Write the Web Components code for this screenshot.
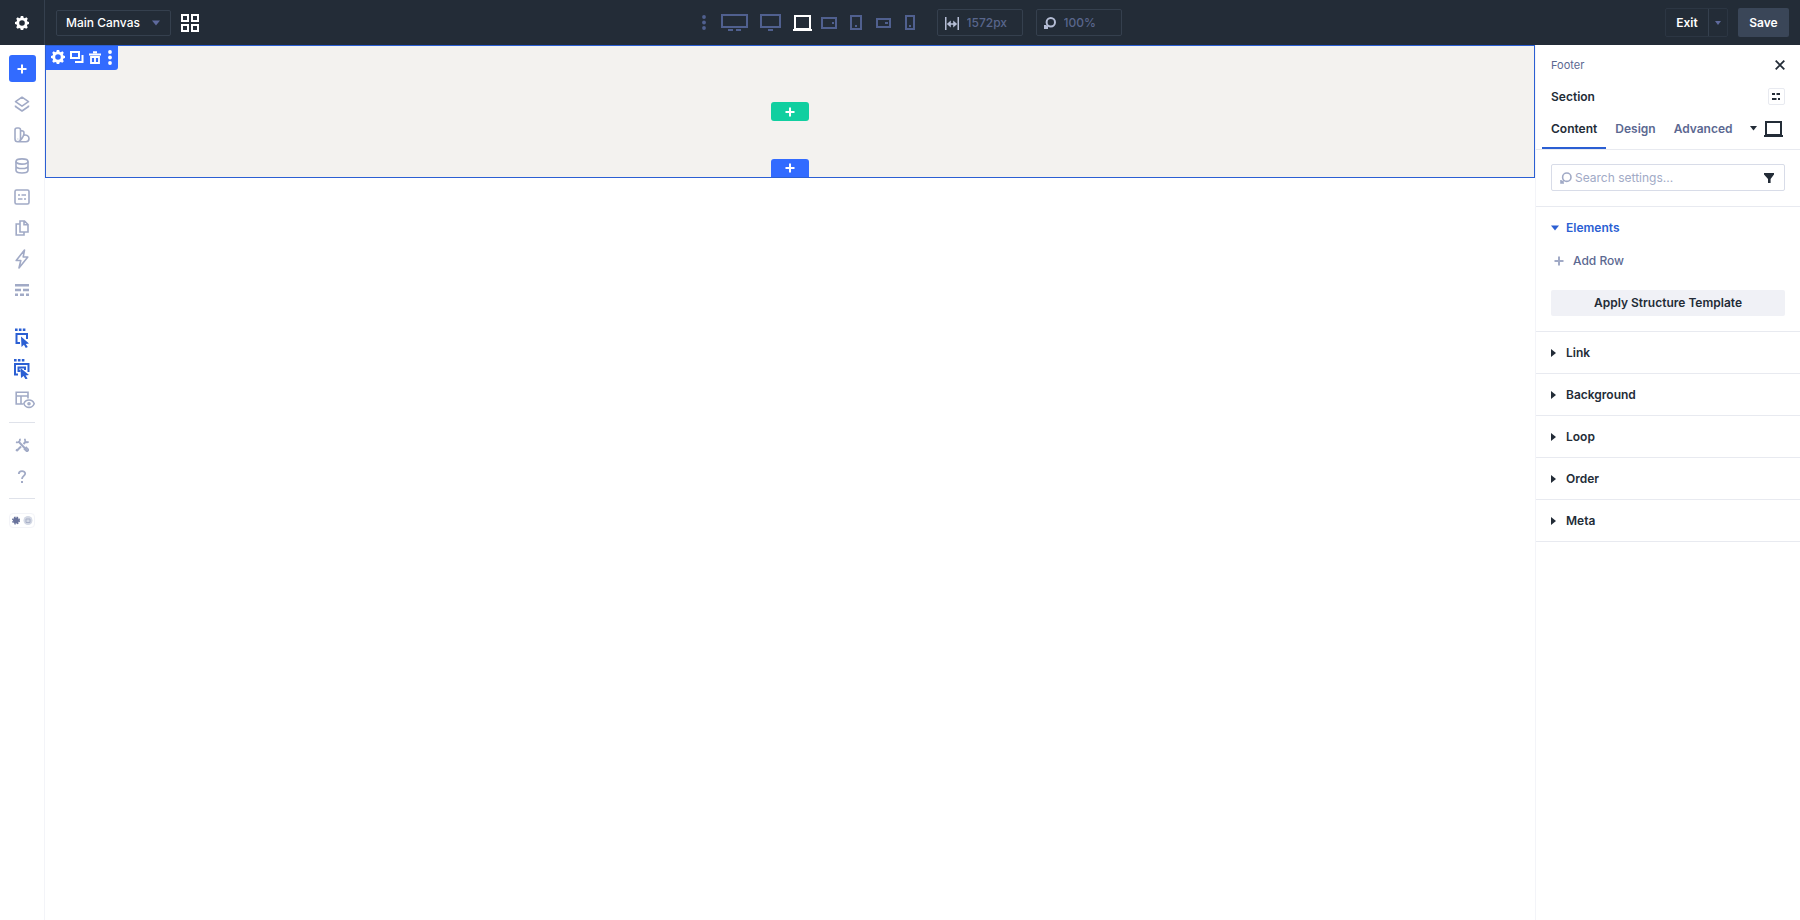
<!DOCTYPE html>
<html lang="en">
<head>
<meta charset="utf-8">
<title>Visual Builder</title>
<style>
    :root {
        --bar: #232c37;
        --bar-line: #35404e;
        --blue: #326bff;
        --blue-dark: #2b5fd3;
        --green: #10cfa0;
        --ink: #232c37;
        --slate: #5b6891;
        --muted: #a1aac6;
        --line: #e8eaf0;
        --line-soft: #f3f4f8;
    }
    body {
        margin: 0;
        font-family: Inter, "Liberation Sans", sans-serif;
        font-size: 12px;
        line-height: 16px;
        color: var(--ink);
        background: #fff;
    }
</style>
</head>
<body>
<builder-app></builder-app>

<script>
// shared by every component that has controls
const resetCss = /*css*/`
    * { box-sizing: border-box; }
    button, input, select {
        font: inherit;
        color: inherit;
        background: none;
        border: 0;
        padding: 0;
        margin: 0;
    }
    button {
        display: flex;
        align-items: center;
        justify-content: center;
        cursor: pointer;
    }
`;

// name: [width, height, markup]
const icons = {
    cog: [14, 14, '<path stroke="none" fill="currentColor" fill-rule="evenodd" d="M5.8 0h2.4l.4 1.8 1.2.5 1.6-1 1.400 1.500-.9 1.500.5 1.300 1.600.3v2.200l-1.600.4-.5 1.300.9 1.500-1.500 1.500-1.500-.9-1.300.5-.3 1.900H5.800l-.4-1.900-1.200-.5-1.600.9-1.400-1.500.9-1.500-.5-1.300L0 8.100V5.900l1.600-.3.5-1.300-.9-1.500 1.500-1.500 1.500 1 1.200-.5zM7 4.200a2.800 2.800 0 1 0 0 5.600 2.800 2.800 0 0 0 0-5.600z"/>'],
    grid: [18, 18, '<path stroke-width="2" d="M1 1h6v6H1zM11 1h6v6h-6zM1 11h6v6H1zM11 11h6v6h-6z"/>'],
    dots: [4, 15, '<g stroke="none" fill="currentColor"><circle cx="2" cy="2" r="1.9"/><circle cx="2" cy="7.5" r="1.9"/><circle cx="2" cy="13" r="1.9"/></g>'],
    wide: [27, 17, '<path stroke-width="2" d="M1 1h25v12H1z"/><path stroke-width="2" d="M7 16h5M15 16h5"/>'],
    desktop: [21, 17, '<path stroke-width="2" d="M1 1h19v12H1zM8 16h5"/>'],
    laptop: [19, 16, '<path stroke-width="2" d="M2 1h15v13H2zM0 15h19"/>'],
    tabletLand: [16, 12, '<path stroke-width="2" d="M1 1h14v10H1z"/><path stroke-width="2" d="M11 6h2"/>'],
    tablet: [12, 15, '<path stroke-width="2" d="M1 1h10v13H1z"/><path stroke-width="2" d="M5 11h2"/>'],
    phoneLand: [15, 10, '<path stroke-width="2" d="M1 1h13v8H1z"/><path stroke-width="2" d="M9 5h3"/>'],
    phone: [10, 15, '<path stroke-width="2" d="M1 1h8v13H1z"/><path stroke-width="2" d="M4 11h2"/>'],
    width: [14, 14, '<path stroke-width="1.5" d="M.75 1v13M13.25 1v13M3 8h8"/><path stroke="none" fill="currentColor" d="M1.800 8l4-3.600v7.200zM12.200 8l-4-3.600v7.200z"/>'],
    search: [12, 13, '<circle cx="6.800" cy="6.200" r="4.200"/><path d="M4 9.200L1.200 12M1 9v3h3"/>'],
    caret: [8, 6, '<path stroke="none" fill="currentColor" d="M0 .5h8L4 5.500z"/>'],
    caretRight: [5, 8, '<path stroke="none" fill="currentColor" d="M0 0L5 4 0 8z"/>'],
    plus: [10, 10, '<path stroke-width="2" d="M5 .5v9M.5 5h9"/>'],
    copy: [14, 13, '<path stroke-width="2" d="M1 1h8v6H1z"/><path stroke-width="2" d="M12.500 4v7H5"/>'],
    trash: [12, 13, '<path stroke-width="2" d="M0 3.500h12M4 1.200h4"/><path stroke-width="1.800" d="M2 6h8v6H2zM6 6v6"/>'],
    layers: [16, 16, '<path stroke-linejoin="round" d="M8 1.200l6.500 4.500L8 10.200 1.500 5.700zM1.500 9.500v1L8 15l6.500-4.500v-1"/>'],
    swatches: [16, 16, '<path d="M1 3a2 2 0 0 1 2-2h1.500a2 2 0 0 1 2 2v9a2.700 2.700 0 0 1-5.500 0zM6.500 4.500a2 2 0 0 1 3.500 1.500c0 2-1.500 5-3.700 7.500M10 8.200c2.500-.6 5 .8 5 3.300 0 2-1.200 3.200-3 3.200H4M3.700 11.800v.4"/>'],
    database: [14, 16, '<ellipse cx="7" cy="3.500" rx="6" ry="2.600"/><path d="M1 3.500v8.800c0 3.600 12 3.600 12 0V3.500M1 8c0 3.400 12 3.400 12 0"/>'],
    sliders: [16, 16, '<rect x="1" y="1" width="14" height="14" rx="1.500"/><path d="M4 6h2M7.500 6H12M4 10h4.500M10 10h2"/>'],
    pages: [14, 16, '<path d="M5 1h4.500L13 4.500V12H5zM9 1.500v3.200h3.500M4.500 4H1.200v11H9v-2.500"/>'],
    bolt: [14, 20, '<path stroke-linejoin="round" d="M9.500 1L1.200 11.500h4.600L4 19l8.800-11H8.200z"/>'],
    rows: [14, 12, '<path stroke-width="2.600" d="M0 1.300h14M0 6h6M8 6h6M0 10.700h3M5 10.700h4M11 10.700h3"/>'],
    pick: [14, 20, '<path stroke-width="2.600" d="M0 1.800h2.600M3.900 1.800h2.600M7.800 1.800h2.600"/><path stroke-width="2" d="M5 15H1.500V6H12v5"/><path stroke="none" fill="currentColor" d="M6 8.500l8 7-3.200.4 2 3.200-2 .9-1.900-3.300L6.500 19z"/>'],
    pickMulti: [16, 20, '<path stroke-width="2.600" d="M0 1.300h2.600M3.900 1.300h2.600M7.800 1.300h2.600"/><path stroke-width="2" d="M4 15.500H1V5h13.500v8"/><path stroke-width="2" d="M6.500 12H4.500V8.500H11V11"/><path stroke="none" fill="currentColor" d="M6.500 9l8.500 7-3.400.4 2 3-2 1-2-3.300L7 19z"/>'],
    layoutEye: [20, 18, '<path d="M13 7.500V1.200H1.200V13H8M1.200 5H13M6 5v8"/><path fill="#fff" d="M8.800 12.700c2-4.900 8.400-4.900 10.400 0-2.100 4.900-8.300 4.900-10.400 0z"/><circle cx="14" cy="12.700" r="1"/>'],
    tools: [14, 14, '<path stroke-width="2" d="M3.500 3.500l8 8.500M2 12.500l4-4M8.500 6L11 3.500"/><path stroke-width="1.800" d="M4.800.8C5.500 3 3.500 5 1 4.200M13.500 3.500c-1 1.500-3.800 1.200-3.600-2.700M9 10.500l3 3 1.600-1.600-3-3M1 11.500l1.700 1.700"/>'],
    help: [10, 13, '<path stroke-width="1.800" d="M1.800 4C1.800.2 8.200.2 8.200 3.600 8.200 6 5 5.800 5 9"/><path stroke-width="2" d="M4 12h2"/>'],
    mode: [24, 13, '<g stroke="none"><circle cx="6" cy="6.500" r="3" fill="#69739c"/><circle cx="18" cy="6.500" r="4.500" fill="#d3d8e4"/></g><circle cx="6" cy="6.500" r="3.400" stroke="#69739c" stroke-dasharray="1.600 1.100" stroke-width="1.200"/><path stroke="#a9b1c8" stroke-width="1" d="M16 5h4v3.500h-4z"/>'],
    close: [10, 10, '<path stroke-width="1.800" d="M.7.7l8.600 8.600M9.300.7L.7 9.300"/>'],
    options: [9, 7, '<path stroke-width="2" d="M0 1h3M4.500 1H8M0 6h4.500M6 6h2"/>'],
    filter: [10, 10, '<path stroke="none" fill="currentColor" d="M0 0h10v1.500L6.600 6v4H4V6L0 1.500z"/>']
};

class BuilderIcon extends HTMLElement {
    connectedCallback() {
        const [w, h, markup] = icons[this.getAttribute('name')];
        const root = this.shadowRoot || this.attachShadow({ mode: 'open' });
        root.innerHTML = /*html*/`
            <style>
                :host { display: flex; flex: none; }
                svg { display: block; fill: none; stroke: currentColor; stroke-width: var(--icon-stroke, 1.6); }
            </style>
            <svg width="${w}" height="${h}" viewBox="0 0 ${w} ${h}" aria-hidden="true">${markup}</svg>
        `;
    }
}
customElements.define('builder-icon', BuilderIcon);

class BuilderTopbar extends HTMLElement {
    constructor() {
        super();
        this.attachShadow({ mode: 'open' });
        this._render();
    }

    _device(icon, label) {
        const active = icon === 'laptop';
        return /*html*/`<button class="${icon}" aria-label="${label}" aria-pressed="${active}"><builder-icon name="${icon}"></builder-icon></button>`;
    }

    _render() {
        this.shadowRoot.innerHTML = /*html*/`
            <style>
                ${resetCss}
                :host {
                    display: grid;
                    grid-template-columns: 1fr auto 1fr;
                    height: 45px;
                    background: var(--bar);
                    color: #fff;
                    font-weight: 500;
                }
                .left, .center, .right { display: flex; align-items: center; }
                .settings {
                    width: 45px;
                    height: 45px;
                    border-right: 1px solid var(--bar-line);
                }
                .canvas {
                    display: flex;
                    align-items: center;
                    width: 115px;
                    height: 26px;
                    margin: 0 10px 0 11px;
                    padding-right: 10px;
                    border: 1px solid var(--bar-line);
                    border-radius: 2px;
                }
                .canvas select { flex: 1; height: 24px; padding-left: 9px; appearance: none; outline: 0; }
                .canvas builder-icon { color: #5f6a9d; }
                .center { padding-left: 12px; gap: 13px; }
                .devices { display: flex; color: #50608f; }
                .devices button { width: 27px; height: 26px; }
                .devices .dots { width: 26px; }
                .devices .wide, .devices .desktop { width: 36px; }
                .devices [aria-pressed="true"] { color: #fff; }
                .field {
                    display: flex;
                    align-items: center;
                    gap: 8px;
                    width: 86px;
                    height: 27px;
                    padding: 0 7px;
                    border: 1px solid var(--bar-line);
                    border-radius: 2px;
                    color: #b5bdd5;
                    --icon-stroke: 2;
                }
                .field input { flex: 1; min-width: 0; color: #59668c; }
                .right { justify-content: flex-end; gap: 10px; padding-right: 11px; font-weight: 600; }
                .exit {
                    display: flex;
                    height: 29px;
                    border: 1px solid #2c3643;
                    border-radius: 2px;
                }
                .exit button { width: 42px; }
                .exit .more { width: 19px; border-left: 1px solid var(--bar-line); color: #5f6a9d; }
                .save { width: 51px; height: 29px; border-radius: 2px; background: #3a4658; }
            </style>
            <div class="left">
                <button class="settings" aria-label="Builder settings"><builder-icon name="cog"></builder-icon></button>
                <label class="canvas">
                    <select aria-label="Canvas"><option>Main Canvas</option></select>
                    <builder-icon name="caret"></builder-icon>
                </label>
                <button aria-label="Canvas grid"><builder-icon name="grid"></builder-icon></button>
            </div>
            <div class="center">
                <div class="devices">
                    ${this._device('dots', 'Breakpoints')}
                    ${this._device('wide', 'Ultra wide')}
                    ${this._device('desktop', 'Widescreen')}
                    ${this._device('laptop', 'Desktop')}
                    ${this._device('tabletLand', 'Tablet wide')}
                    ${this._device('tablet', 'Tablet')}
                    ${this._device('phoneLand', 'Phone wide')}
                    ${this._device('phone', 'Phone')}
                </div>
                <label class="field"><builder-icon name="width"></builder-icon><input aria-label="Width" value="1572px"></label>
                <label class="field"><builder-icon name="search"></builder-icon><input aria-label="Zoom" value="100%"></label>
            </div>
            <div class="right">
                <div class="exit">
                    <button>Exit</button>
                    <button class="more" aria-label="Exit options"><svg width="6" height="4" aria-hidden="true"><path fill="currentColor" d="M0 0h6L3 4z"/></svg></button>
                </div>
                <button class="save">Save</button>
            </div>
        `;
    }
}
customElements.define('builder-topbar', BuilderTopbar);

class BuilderSidebar extends HTMLElement {
    constructor() {
        super();
        this.attachShadow({ mode: 'open' });
        this._render();
    }

    _group(items) {
        return items.map(([icon, label]) => /*html*/`<button class="${icon}" aria-label="${label}"><builder-icon name="${icon}"></builder-icon></button>`).join('');
    }

    _render() {
        this.shadowRoot.innerHTML = /*html*/`
            <style>
                ${resetCss}
                :host {
                    display: flex;
                    flex-direction: column;
                    align-items: center;
                    flex: none;
                    box-sizing: border-box;
                    width: 45px;
                    padding-top: 10px;
                    border-right: 1px solid var(--line-soft);
                    color: var(--muted);
                }
                .add { width: 27px; height: 27px; border-radius: 3px; background: var(--blue); color: #fff; }
                nav { display: flex; flex-direction: column; gap: 7px; }
                nav button { width: 30px; height: 24px; }
                .main { margin-top: 10px; }
                .view { margin-top: 24px; }
                .view .pick, .view .pickMulti { color: var(--blue-dark); }
                .view .layoutEye { justify-content: flex-start; padding-left: 8px; }
                hr { width: 26px; height: 1px; margin: 10px 0; border: 0; background: #dfe2ea; }
                .mode { margin-top: 4px; border: 1px solid var(--line-soft); border-radius: 4px; }
            </style>
            <button class="add" aria-label="Add"><builder-icon name="plus"></builder-icon></button>
            <nav class="main" aria-label="Builder">${this._group([
                ['layers', 'Layers'],
                ['swatches', 'Design variables'],
                ['database', 'Data'],
                ['sliders', 'Page settings'],
                ['pages', 'Library'],
                ['bolt', 'Interactions'],
                ['rows', 'Wireframe']
            ])}</nav>
            <nav class="view" aria-label="View">${this._group([
                ['pick', 'Select'],
                ['pickMulti', 'Select parents'],
                ['layoutEye', 'Show layout']
            ])}</nav>
            <hr>
            <nav aria-label="Help">${this._group([['tools', 'Tools'], ['help', 'Help']])}</nav>
            <hr>
            <button class="mode" aria-label="Color mode"><builder-icon name="mode"></builder-icon></button>
        `;
    }
}
customElements.define('builder-sidebar', BuilderSidebar);

class BuilderSection extends HTMLElement {
    constructor() {
        super();
        this.attachShadow({ mode: 'open' });
        this._render();
    }

    _render() {
        this.shadowRoot.innerHTML = /*html*/`
            <style>
                ${resetCss}
                :host {
                    display: flex;
                    flex-direction: column;
                    align-items: center;
                    gap: 38px;
                    box-sizing: border-box;
                    position: relative;
                    padding-top: 56px;
                    border: 1px solid var(--blue-dark);
                    background: #f3f2ef;
                    color: #fff;
                }
                /* floats over the section's top left corner */
                .tools {
                    position: absolute;
                    top: 0;
                    left: 0;
                    display: flex;
                    align-items: center;
                    gap: 5px;
                    height: 24px;
                    padding: 0 6px 2px 5px;
                    border-radius: 0 0 3px 0;
                    background: var(--blue);
                }
                .tools button:last-child { padding-left: 2px; }
                .add { width: 38px; height: 19px; border-radius: 3px; background: var(--green); }
                .add.after { height: 18px; border-radius: 3px 3px 0 0; background: var(--blue); }
            </style>
            <div class="tools">
                <button aria-label="Settings"><builder-icon name="cog"></builder-icon></button>
                <button aria-label="Duplicate"><builder-icon name="copy"></builder-icon></button>
                <button aria-label="Delete"><builder-icon name="trash"></builder-icon></button>
                <button aria-label="More"><builder-icon name="dots"></builder-icon></button>
            </div>
            <button class="add" aria-label="Add row"><builder-icon name="plus"></builder-icon></button>
            <button class="add after" aria-label="Add section"><builder-icon name="plus"></builder-icon></button>
        `;
    }
}
customElements.define('builder-section', BuilderSection);

class SettingGroup extends HTMLElement {
    constructor() {
        super();
        this.attachShadow({ mode: 'open' });
    }

    connectedCallback() {
        this._render();
    }

    _render() {
        const open = this.hasAttribute('open');
        this.shadowRoot.innerHTML = /*html*/`
            <style>
                ${resetCss}
                :host { display: block; border-bottom: 1px solid var(--line); }
                h3 { margin: 0; font-size: 12px; font-weight: 600; }
                button { width: 100%; height: 41px; padding: 0 15px; justify-content: flex-start; }
                .mark { display: flex; width: 15px; }
                .body { display: none; padding: 0 15px 15px; }
                :host([open]) button { color: var(--blue-dark); }
                :host([open]) .body { display: block; }
            </style>
            <h3><button aria-expanded="${open}"><span class="mark"><builder-icon name="${open ? 'caret' : 'caretRight'}"></builder-icon></span>${this.getAttribute('label')}</button></h3>
            <div class="body"><slot></slot></div>
        `;
        this.shadowRoot.querySelector('button').onclick = () => {
            this.toggleAttribute('open');
            this._render();
        };
    }
}
customElements.define('setting-group', SettingGroup);

class SettingsPanel extends HTMLElement {
    constructor() {
        super();
        this.attachShadow({ mode: 'open' });
        this._render();
    }

    _render() {
        this.shadowRoot.innerHTML = /*html*/`
            <style>
                ${resetCss}
                :host {
                    display: block;
                    box-sizing: border-box;
                    flex: none;
                    width: 265px;
                    border-left: 1px solid var(--line-soft);
                }
                .crumb, .title {
                    display: flex;
                    align-items: center;
                    justify-content: space-between;
                    padding: 0 15px;
                }
                .crumb { padding-top: 12px; }
                .crumb a { font-size: 11px; color: var(--slate); text-decoration: none; }
                .title { padding-top: 15px; }
                h2 { margin: 0; font-size: 12px; font-weight: 600; }
                .options { width: 17px; height: 17px; border: 1px solid var(--line); border-radius: 2px; }
                .tabs {
                    display: flex;
                    margin-top: 5px;
                    padding: 0 17px 0 6px;
                    border-bottom: 1px solid var(--line);
                    font-weight: 600;
                    color: var(--slate);
                }
                .tabs button { height: 39px; padding: 0 9px; border-bottom: 2px solid transparent; }
                .tabs [aria-selected="true"] { color: var(--ink); border-color: var(--blue-dark); }
                .tabs .device { margin-left: auto; padding: 0; gap: 7px; color: var(--ink); }
                .search {
                    display: flex;
                    align-items: center;
                    gap: 3px;
                    height: 27px;
                    margin: 14px 15px 15px;
                    padding: 0 10px 0 8px;
                    border: 1px solid #d8dce8;
                    border-radius: 2px;
                }
                .search > builder-icon { color: var(--muted); }
                .search input { flex: 1; min-width: 0; outline: 0; }
                .search input::placeholder { color: var(--muted); opacity: 1; }
                .groups { border-top: 1px solid var(--line); }
                .row { gap: 9px; margin: 5px 0 21px 3px; font-weight: 500; color: var(--slate); }
                .row builder-icon { color: var(--muted); }
                .apply { width: 100%; height: 26px; border-radius: 2px; background: #f0f1f6; font-weight: 600; }
            </style>
            <div class="crumb">
                <a href="#footer">Footer</a>
                <button aria-label="Close"><builder-icon name="close"></builder-icon></button>
            </div>
            <div class="title">
                <h2>Section</h2>
                <button class="options" aria-label="Options"><builder-icon name="options"></builder-icon></button>
            </div>
            <div class="tabs" role="tablist">
                <button role="tab" aria-selected="true">Content</button>
                <button role="tab" aria-selected="false">Design</button>
                <button role="tab" aria-selected="false">Advanced</button>
                <button class="device" aria-label="Breakpoint">
                    <svg width="7" height="5" aria-hidden="true"><path fill="currentColor" d="M0 0h7L3.500 4.500z"/></svg>
                    <builder-icon name="laptop"></builder-icon>
                </button>
            </div>
            <div class="search">
                <builder-icon name="search"></builder-icon>
                <input type="text" aria-label="Search settings" placeholder="Search settings...">
                <button aria-label="Filter"><builder-icon name="filter"></builder-icon></button>
            </div>
            <div class="groups">
                <setting-group label="Elements" open>
                    <button class="row"><builder-icon name="plus"></builder-icon>Add Row</button>
                    <button class="apply">Apply Structure Template</button>
                </setting-group>
                <setting-group label="Link"></setting-group>
                <setting-group label="Background"></setting-group>
                <setting-group label="Loop"></setting-group>
                <setting-group label="Order"></setting-group>
                <setting-group label="Meta"></setting-group>
            </div>
        `;
    }
}
customElements.define('settings-panel', SettingsPanel);

class BuilderApp extends HTMLElement {
    constructor() {
        super();
        this.attachShadow({ mode: 'open' });
        this.shadowRoot.innerHTML = /*html*/`
            <style>
                :host { display: flex; flex-direction: column; min-height: 100vh; }
                .work { display: flex; flex: 1; }
                main { flex: 1; min-width: 0; }
            </style>
            <builder-topbar></builder-topbar>
            <div class="work">
                <builder-sidebar></builder-sidebar>
                <main><builder-section></builder-section></main>
                <settings-panel></settings-panel>
            </div>
        `;
    }
}
customElements.define('builder-app', BuilderApp);
</script>
</body>
</html>
